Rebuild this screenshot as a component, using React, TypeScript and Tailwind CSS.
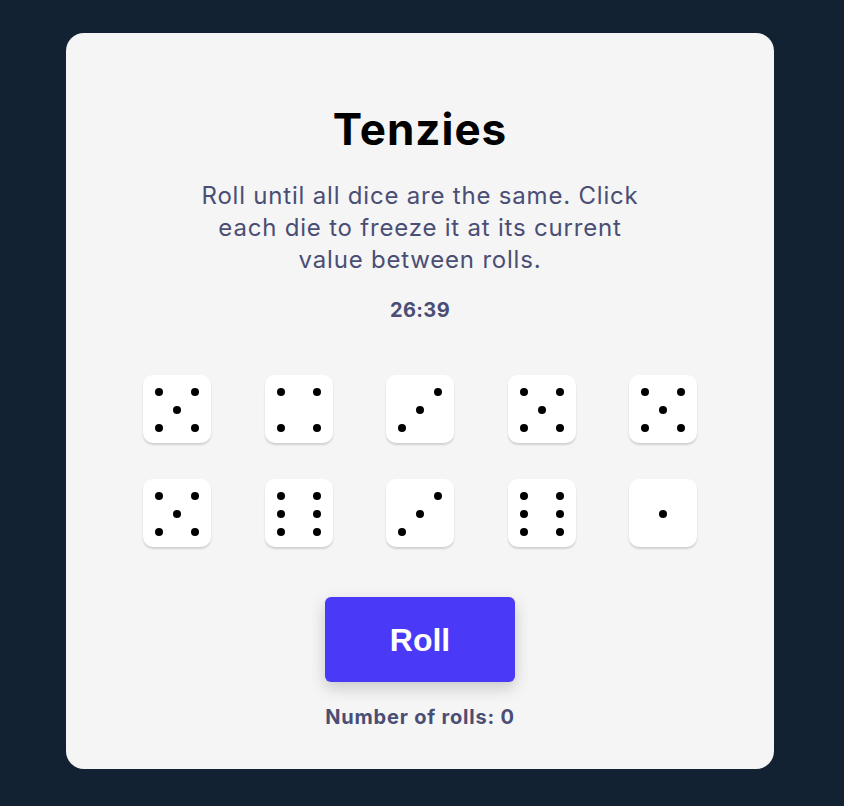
const dice = [5, 4, 3, 5, 5, 5, 6, 3, 6, 1];

// pip positions on a 3x3 grid (row, col)
const pips: Record<number, [number, number][]> = {
  1: [[1, 1]],
  2: [[0, 2], [2, 0]],
  3: [[0, 2], [1, 1], [2, 0]],
  4: [[0, 0], [0, 2], [2, 0], [2, 2]],
  5: [[0, 0], [0, 2], [1, 1], [2, 0], [2, 2]],
  6: [[0, 0], [0, 2], [1, 0], [1, 2], [2, 0], [2, 2]],
};

function Die({ value }: { value: number }) {
  return (
    <button className="relative w-[68px] h-[68px] bg-white rounded-[10px] shadow-[0_2px_2px_rgba(0,0,0,0.15)]">
      {pips[value].map(([r, c], i) => (
        <span
          key={i}
          className="absolute w-[8px] h-[8px] rounded-full bg-black"
          style={{ top: 12.5 + r * 18, left: 12 + c * 18 }}
        />
      ))}
    </button>
  );
}

export default function App() {
  return (
    <div className="min-h-screen bg-[#132233] pt-[33px] pl-[66px] font-['Inter',sans-serif]">
      <main className="w-[708px] h-[736px] bg-[#f5f5f5] rounded-[18px] flex flex-col items-center pt-[70px]">
        <h1 className="text-[44px] leading-[52px] font-bold text-black tracking-[1px]">Tenzies</h1>
        <p className="mt-[25px] w-[450px] text-center text-[24px] leading-[32px] tracking-[0.8px] text-[#4a4e74]">
          Roll until all dice are the same. Click each die to freeze it at its current value between rolls.
        </p>
        <p className="mt-[22px] text-[20px] leading-[24px] font-bold text-[#4a4e74] tracking-[0.4px]">26:39</p>
        <div className="mt-[53px] grid grid-cols-5 gap-x-[53.5px] gap-y-[36px]">
          {dice.map((v, i) => (
            <Die key={i} value={v} />
          ))}
        </div>
        <button className="mt-[50px] w-[190px] h-[85px] rounded-[6px] bg-[#4a3af7] text-white text-[32px] font-bold font-['Liberation_Sans',sans-serif] shadow-[0_6px_16px_rgba(0,0,0,0.18)]">
          Roll
        </button>
        <p className="mt-[23px] text-[20px] leading-[24px] font-bold text-[#4a4e74] tracking-[0.8px]">Number of rolls: 0</p>
      </main>
    </div>
  );
}
